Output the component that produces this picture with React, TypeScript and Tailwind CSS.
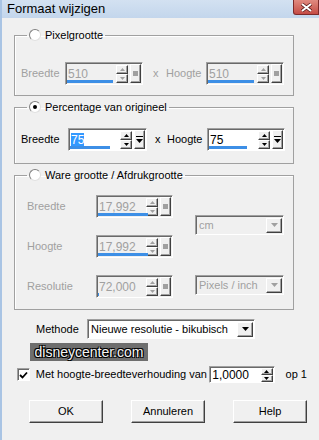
import type { ReactNode } from "react";

const sunken =
  "border border-t-[#a0a0a0] border-l-[#a0a0a0] border-r-white border-b-white shadow-[inset_1px_1px_0_#696969]";
const raised =
  "border border-t-white border-l-white border-r-[#404040] border-b-[#404040] shadow-[inset_-1px_-1px_0_#a0a0a0]";

function Radio({ checked }: { checked?: boolean }) {
  return (
    <span className="flex h-[12px] w-[12px] items-center justify-center rounded-full border border-t-[#808080] border-l-[#808080] border-r-[#e0e0e0] border-b-[#e0e0e0] bg-white">
      {checked && <span className="h-[4px] w-[4px] rounded-full bg-black" />}
    </span>
  );
}

function Legend({ label, checked, indent }: { label: string; checked?: boolean; indent: number }) {
  return (
    <legend className="flex h-[14px] items-center gap-[4px] px-[2px] text-[11px] text-black" style={{ marginLeft: indent }}>
      <Radio checked={checked} />
      <span>{label}</span>
    </legend>
  );
}

function Arrow({ down, disabled }: { down?: boolean; disabled?: boolean }) {
  return (
    <svg width="5" height="3" viewBox="0 0 5 3">
      <path d={down ? "M0 0H5L2.5 3Z" : "M0 3H5L2.5 0Z"} fill={disabled ? "#a0a0a0" : "#000"} />
    </svg>
  );
}

function Spinner({ disabled }: { disabled?: boolean }) {
  return (
    <div className="flex w-[12px] flex-col">
      <div className={`flex h-[9px] items-center justify-center bg-[#f0f0f0] ${raised}`}>
        <Arrow disabled={disabled} />
      </div>
      <div className={`flex h-[9px] items-center justify-center bg-[#f0f0f0] ${raised}`}>
        <Arrow down disabled={disabled} />
      </div>
    </div>
  );
}

function SpinField({
  value,
  width,
  bar,
  disabled,
  selected,
}: {
  value: string;
  width: number;
  bar: number;
  disabled?: boolean;
  selected?: boolean;
}) {
  return (
    <div
      className={`flex h-[23px] items-center pr-[1px] ${sunken} ${disabled ? "bg-[#f0f0f0]" : "bg-white"}`}
      style={{ width }}
    >
      <div className="relative flex h-full flex-1 items-center pl-[2px]">
        <span
          className={`text-[12px] leading-[14px] ${disabled ? "text-[#a0a0a0]" : selected ? "bg-[#3399ff] text-white" : "text-black"}`}
        >
          {value}
        </span>
        <span className="absolute bottom-[1px] left-[1px] h-[3px] bg-[#3d8fe6]" style={{ width: bar }} />
      </div>
      <div className="ml-[2px]">
        <Spinner disabled={disabled} />
      </div>
      <div className={`ml-[2px] flex h-[19px] w-[11px] items-center justify-center bg-[#f0f0f0] ${raised}`}>
        {disabled ? (
          <span className="h-[5px] w-[5px] bg-[#a0a0a0]" />
        ) : (
          <svg width="7" height="7" viewBox="0 0 7 7">
            <path d="M0 0H7V1H0Z M0 3H7L3.5 7Z" fill="#000" />
          </svg>
        )}
      </div>
    </div>
  );
}

function Select({
  value,
  width,
  height,
  disabled,
}: {
  value: string;
  width: number;
  height: number;
  disabled?: boolean;
}) {
  return (
    <div
      className={`flex items-center ${sunken} ${disabled ? "bg-[#f0f0f0]" : "bg-white"}`}
      style={{ width, height }}
    >
      <span className={`flex-1 whitespace-nowrap pl-[3px] text-[11px] ${disabled ? "text-[#a0a0a0]" : "text-black"}`}>
        {value}
      </span>
      <div className={`mr-[1px] flex h-[15px] w-[16px] items-center justify-center bg-[#f0f0f0] ${raised}`}>
        <svg width="7" height="4" viewBox="0 0 7 4">
          <path d="M0 0H7L3.5 4Z" fill={disabled ? "#a0a0a0" : "#000"} />
        </svg>
      </div>
    </div>
  );
}

function Label({ children, width, disabled }: { children: ReactNode; width: number; disabled?: boolean }) {
  return (
    <span className={`text-[11px] ${disabled ? "text-[#a0a0a0]" : "text-black"}`} style={{ width }}>
      {children}
    </span>
  );
}

function Button({ children }: { children: ReactNode }) {
  return (
    <button className={`flex h-[23px] w-[74px] items-center justify-center bg-[#f0f0f0] text-[11px] text-black ${raised}`}>
      {children}
    </button>
  );
}

export default function App() {
  return (
    <div className="h-[440px] w-[319px] overflow-hidden border-l-2 border-[#a9c4e4] bg-[#f0f0f0] font-['Liberation_Sans',Arial,sans-serif]">
      <div className="flex h-[18px] items-start justify-between bg-gradient-to-b from-[#d3e1f1] to-[#c3d6ec]">
        <span className="pl-[5px] pt-[1px] text-[13px] leading-[15px] text-black">Formaat wijzigen</span>
        <div className="flex h-[15px] w-[26px] items-center justify-center rounded-bl-[3px] border border-t-0 border-[#7d2a2a] bg-gradient-to-b from-[#e08a80] to-[#c44a45]">
          <svg width="11" height="9" viewBox="0 0 11 9">
            <path d="M1 1L10 8M10 1L1 8" stroke="#5a1a1a" strokeWidth="3.4" />
            <path d="M1 1L10 8M10 1L1 8" stroke="#fff" strokeWidth="2" />
          </svg>
        </div>
      </div>

      <div className="flex flex-col px-[12px] pt-[10px]">
        <fieldset className="w-[280px] border border-[#a0a0a0] pb-[10px] pl-[6px] pt-[20px] shadow-[inset_1px_1px_0_#fff]">
          <Legend label="Pixelgrootte" indent={6} />
          <div className="flex items-center">
            <Label width={44} disabled>
              Breedte
            </Label>
            <SpinField value="510" width={78} bar={46} disabled />
            <span className="ml-[10px] w-[13px] text-[11px] text-[#a0a0a0]">x</span>
            <Label width={40} disabled>
              Hoogte
            </Label>
            <SpinField value="510" width={78} bar={46} disabled />
          </div>
        </fieldset>

        <fieldset className="mt-[4px] w-[280px] border border-[#a0a0a0] pb-[12px] pl-[6px] pt-[14px] shadow-[inset_1px_1px_0_#fff]">
          <Legend label="Percentage van origineel" checked indent={6} />
          <div className="flex items-center">
            <Label width={47}>Breedte</Label>
            <SpinField value="75" width={79} bar={40} selected />
            <span className="ml-[8px] w-[12px] text-[11px] text-black">x</span>
            <Label width={40}>Hoogte</Label>
            <SpinField value="75" width={78} bar={38} />
          </div>
        </fieldset>

        <fieldset className="mt-[4px] w-[280px] border border-[#a0a0a0] pb-[11px] pl-[12px] pt-[13px] shadow-[inset_1px_1px_0_#fff]">
          <Legend label="Ware grootte / Afdrukgrootte" indent={0} />
          <div className="flex">
            <div className="flex flex-col gap-[17px]">
              <div className="flex items-center">
                <Label width={69} disabled>
                  Breedte
                </Label>
                <SpinField value="17,992" width={77} bar={50} disabled />
              </div>
              <div className="flex items-center">
                <Label width={69} disabled>
                  Hoogte
                </Label>
                <SpinField value="17,992" width={77} bar={50} disabled />
              </div>
              <div className="flex items-center">
                <Label width={69} disabled>
                  Resolutie
                </Label>
                <SpinField value="72,000" width={77} bar={1} disabled />
              </div>
            </div>
            <div className="ml-[22px] flex flex-col pt-[20px]">
              <Select value="cm" width={89} height={20} disabled />
              <div className="mt-[40px]">
                <Select value="Pixels / inch" width={89} height={20} disabled />
              </div>
            </div>
          </div>
        </fieldset>

        <div className="mt-[9px] flex items-center pl-[22px]">
          <span className="w-[51px] text-[11px] text-black">Methode</span>
          <Select value="Nieuwe resolutie - bikubisch" width={168} height={20} />
        </div>

        <div className="mt-[4px] ml-[16px] flex h-[18px] w-[118px] items-center justify-center bg-[#6e6e6e]">
          <span className="text-[14px] leading-[16px] text-[#f4f4f4] [text-shadow:1px_1px_0_#000,-1px_-1px_0_#000,1px_-1px_0_#000,-1px_1px_0_#000]">
            disneycenter.com
          </span>
        </div>

        <div className="mt-[5px] flex items-center pl-[3px]">
          <span className={`flex h-[13px] w-[13px] items-center justify-center bg-white ${sunken}`}>
            <svg width="9" height="8" viewBox="0 0 9 8">
              <path d="M1 4L3.5 6.5L8 1.5" stroke="#000" strokeWidth="1.8" fill="none" />
            </svg>
          </span>
          <span className="ml-[6px] w-[178px] whitespace-nowrap text-[11px] text-black">
            Met hoogte-breedteverhouding van
          </span>
          <div className={`flex h-[17px] w-[67px] items-center bg-white pr-[1px] ${sunken}`}>
            <span className="flex-1 pl-[2px] text-[12px] text-black">1,0000</span>
            <div className="flex w-[12px] flex-col">
              <div className={`flex h-[7px] items-center justify-center bg-[#f0f0f0] ${raised}`}>
                <Arrow />
              </div>
              <div className={`flex h-[7px] items-center justify-center bg-[#f0f0f0] ${raised}`}>
                <Arrow down />
              </div>
            </div>
          </div>
          <span className="ml-[11px] whitespace-nowrap text-[11px] text-black">op 1</span>
        </div>

        <div className="mt-[17px] flex gap-[28px] pl-[15px]">
          <Button>OK</Button>
          <Button>Annuleren</Button>
          <Button>Help</Button>
        </div>
      </div>
    </div>
  );
}
